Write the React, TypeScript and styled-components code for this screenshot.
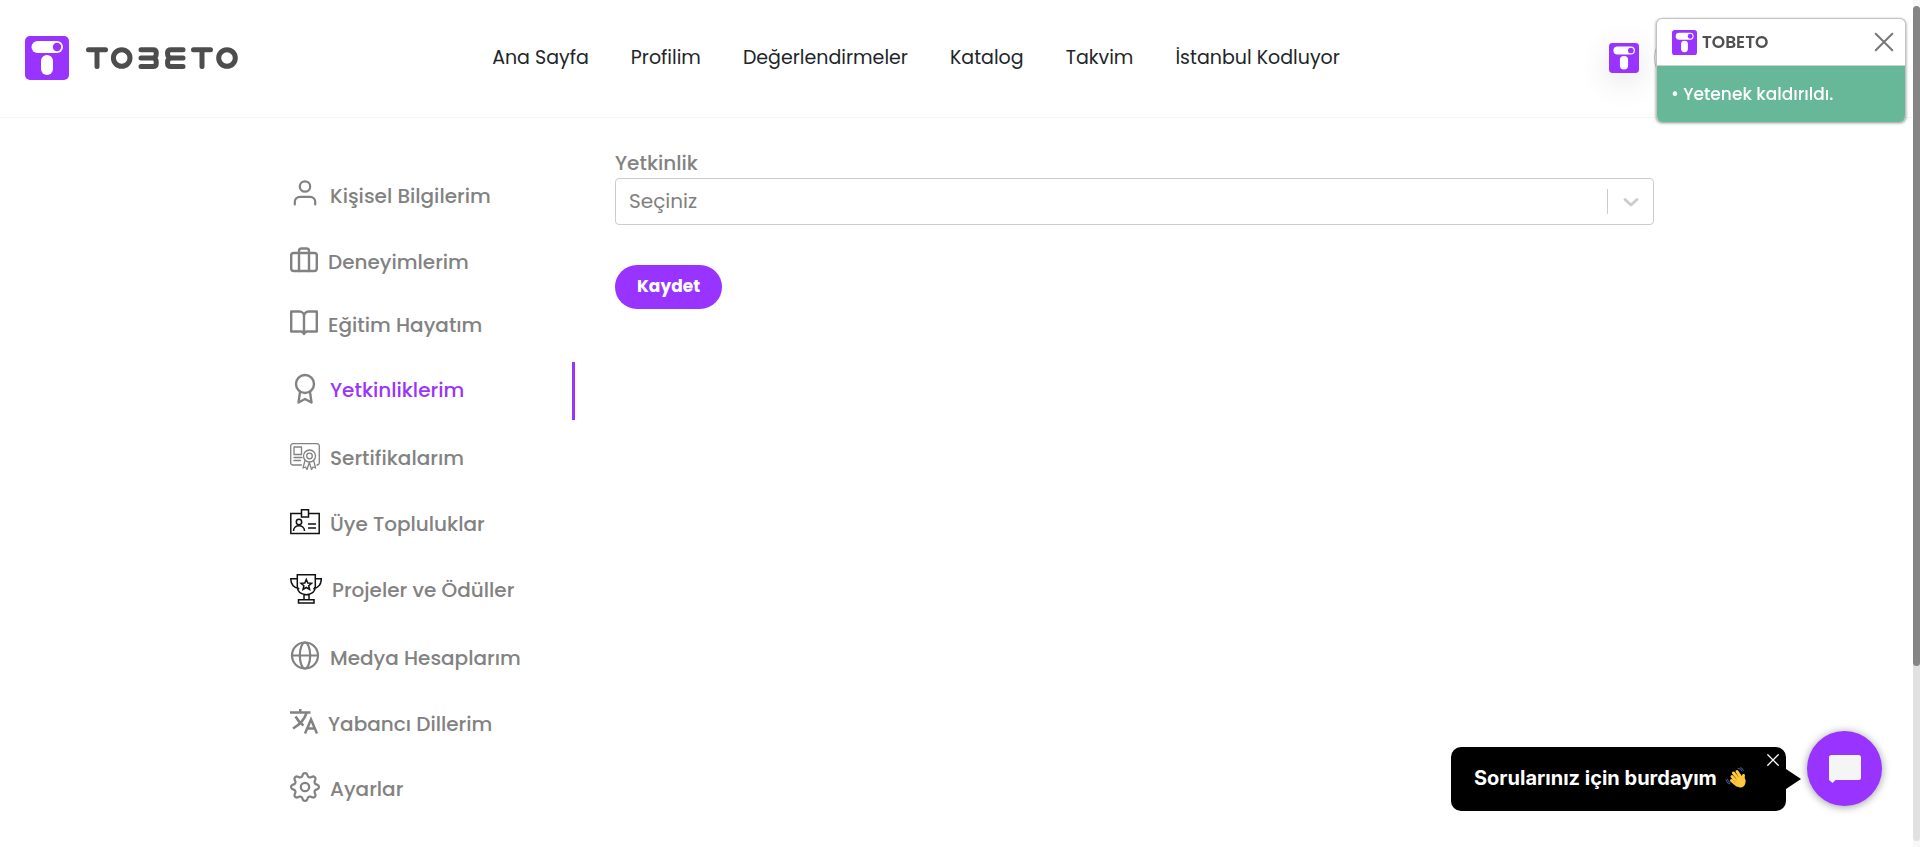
import React from 'react';
import styled, { createGlobalStyle } from 'styled-components';

const Global = createGlobalStyle`
  *, *::before, *::after { box-sizing: border-box; }
  body { margin: 0; background: #fff; color: #828282; font-family: Poppins, Inter, sans-serif; font-size: 18px; line-height: 28px; }
  button, select, input { font-family: inherit; }
  svg { display: block; }
  html { scrollbar-width: none; }
`;

const Page = styled.div`
  padding-right: 7px;
`;

const Header = styled.header`
  display: grid;
  grid-template-columns: auto 1fr auto;
  align-items: center;
  height: 118px;
  padding: 0 24px 2px 25px;
  border-bottom: 1px solid #f4f4f4;
`;

const BrandLink = styled.a`
  justify-self: start;
`;

const Nav = styled.nav`
  display: flex;
  justify-content: center;
  gap: 42px;
  padding-right: 16px;
`;

const NavLink = styled.a`
  color: #212529;
  font-size: 19px;
  line-height: 28px;
  text-decoration: none;
  white-space: nowrap;
`;

const HeaderTools = styled.div`
  display: flex;
  align-items: center;
  gap: 15px;
`;

const AppButton = styled.button`
  padding: 0;
  border: 0;
  border-radius: 3px;
  background: none;
  box-shadow: 0 8px 32px rgba(0, 0, 0, 0.12);
`;

const ProfileButton = styled.button`
  width: 235px;
  height: 56px;
  border: 1px solid #c4c4c4;
  border-radius: 28px;
  background: #fff;
`;

const Content = styled.div`
  display: grid;
  grid-template-columns: 285px 1fr;
  gap: 40px;
  max-width: 1395px;
  margin: 0 auto;
  padding: 30px 0 0 31px;
`;

const Sidebar = styled.nav`
  display: grid;
  grid-template-rows: 66px 66px 63px 65px 68px 66px 66px 68px 66px 65px;
  align-items: end;
  padding-top: 12px;
`;

const SideLink = styled.a<{ $active?: boolean }>`
  display: flex;
  align-items: center;
  gap: 10px;
  height: 58px;
  padding-bottom: 2px;
  border-right: 3px solid ${(p) => (p.$active ? '#9933ff' : 'transparent')};
  color: ${(p) => (p.$active ? '#9933ff' : '#828282')};
  font-size: 20px;
  line-height: 30px;
  font-weight: 500;
  text-decoration: none;
  white-space: nowrap;
`;

const Icon = styled.svg<{ $tone?: string; $stroke?: number; $sharp?: boolean }>`
  flex: none;
  margin-bottom: 2px;
  fill: none;
  stroke: ${(p) => p.$tone ?? '#828282'};
  stroke-width: ${(p) => p.$stroke ?? 2.2};
  stroke-linecap: ${(p) => (p.$sharp ? 'butt' : 'round')};
  stroke-linejoin: ${(p) => (p.$sharp ? 'miter' : 'round')};
`;

const Form = styled.form`
  display: flex;
  flex-direction: column;
  align-items: flex-start;
`;

const Label = styled.label`
  font-size: 20px;
  line-height: 30px;
  font-weight: 500;
`;

const SelectBox = styled.div`
  display: grid;
  grid-template-columns: 1fr 46px;
  align-items: center;
  width: 100%;
  height: 47px;
  border: 1px solid #ccc;
  border-radius: 4px;
`;

const Select = styled.select`
  grid-area: 1 / 1 / 2 / 3;
  width: 100%;
  height: 45px;
  padding: 0 13px 2px;
  border: 0;
  background: none;
  appearance: none;
  color: #808080;
  font-size: 20px;
`;

const Indicator = styled.span`
  grid-area: 1 / 2 / 2 / 3;
  display: flex;
  align-items: center;
  justify-content: center;
  height: 25px;
  border-left: 1px solid #ccc;
  pointer-events: none;
`;

const SaveButton = styled.button`
  height: 44px;
  margin-top: 40px;
  padding: 0 22px 3px;
  border: 0;
  border-radius: 22px;
  background: #9933ff;
  color: #fff;
  font-size: 17px;
  font-weight: 700;
`;

const Toast = styled.section`
  position: fixed;
  top: 18px;
  right: 14px;
  width: 250px;
  overflow: hidden;
  border: 1px solid #c3c3c3;
  border-bottom: 0;
  border-radius: 6px;
  background: #fff;
  box-shadow: 0 1px 3px rgba(0, 0, 0, 0.45);
`;

const ToastHead = styled.header`
  display: flex;
  align-items: center;
  gap: 5px;
  height: 47px;
  padding: 0 10px 0 15px;
  border-bottom: 1px solid #d0d0d0;
`;

const ToastTitle = styled.strong`
  flex: 1;
  color: #505050;
  font-size: 17px;
  font-weight: 600;
`;

const CloseButton = styled.button`
  padding: 0;
  border: 0;
  background: none;
`;

const ToastBody = styled.p`
  margin: 0;
  padding: 14px;
  background: #66b899;
  color: #fff;
  font-size: 17px;
  line-height: 28px;
  font-weight: 500;
`;

const Chat = styled.aside`
  position: fixed;
  right: 38px;
  bottom: 36px;
  display: flex;
  align-items: flex-end;
`;

const Bubble = styled.div`
  position: relative;
  width: 335px;
  height: 64px;
  padding: 18px 23px;
  border-radius: 10px;
  background: #000;
  color: #fff;
  font-family: Inter, sans-serif;
  font-size: 20px;
  line-height: 26px;
  font-weight: 700;
  white-space: nowrap;
`;

const BubbleText = styled.span`
  display: flex;
  align-items: center;
  gap: 8px;
`;

const BubbleClose = styled(CloseButton)`
  position: absolute;
  top: 6px;
  right: 6px;
`;

const BubbleArrow = styled.svg`
  margin-bottom: 22px;
`;

const Launcher = styled.button`
  display: grid;
  place-items: center;
  width: 75px;
  height: 75px;
  margin: 0 0 5px 6px;
  padding: 0;
  border: 0;
  border-radius: 50%;
  background: #9933ff;
  box-shadow: 0 1px 8px rgba(0, 0, 0, 0.4);
`;

const ScrollRail = styled.div`
  position: fixed;
  top: 0;
  right: 0;
  bottom: 0;
  width: 7px;
  padding: 6px 0;
  background: #f8f8f8;
`;

const ScrollTrack = styled.div`
  height: 100%;
  border-radius: 4px;
  background: #e1e1e1;
`;

const ScrollThumb = styled.div`
  height: 79%;
  border-radius: 4px;
  background: #858585;
`;

const MarkShapes = () => (
  <>
    <rect width="44" height="44" rx="5" fill="#9933ff" />
    <rect x="6.5" y="5" width="31.5" height="12" rx="6" fill="#fff" />
    <circle cx="32" cy="11" r="4.2" fill="#9933ff" />
    <rect x="16" y="19" width="12" height="20" rx="6" fill="#fff" />
  </>
);

const Mark = ({ size }: { size: number }) => (
  <svg width={size} height={size} viewBox="0 0 44 44" aria-hidden="true">
    <MarkShapes />
  </svg>
);

const Logo = () => (
  <svg width="214" height="44" viewBox="0 0 214 44" role="img" aria-label="Tobeto">
    <MarkShapes />
    <g fill="none" stroke="#4d4d4d" strokeWidth="5" strokeLinecap="round" strokeLinejoin="round">
      <path d="M63.5 13.7H80.5M72 14V30.5M168.500 13.7H185.5M177 14V30.5" />
      <circle cx="96.7" cy="22" r="8.3" />
      <circle cx="202" cy="22" r="8.3" />
      <path d="M116 13.7H128Q131.3 13.7 131.3 17Q131.3 22 128 22H116M128 22Q131.3 22 131.3 27Q131.3 30.500 128 30.5H116" />
      <path d="M158 13.7H146Q142.5 13.7 142.5 17Q142.5 22 146 22H158M146 22Q142.5 22 142.5 27Q142.5 30.500 146 30.5H158" />
    </g>
  </svg>
);

const Cross = ({ size, color }: { size: number; color: string }) => (
  <svg width={size} height={size} viewBox="0 0 24 24" stroke={color} strokeWidth="2.2" strokeLinecap="round" aria-hidden="true">
    <path d="M3 3L21 21M21 3L3 21" />
  </svg>
);

const WaveHand = () => (
  <svg width="22" height="22" viewBox="0 0 22 22" fill="none" strokeLinecap="round" role="img" aria-label="el sallama">
    <g stroke="#ffc83d" strokeWidth="3">
      <path d="M7 9.500L13 16M8.500 6L14.500 13M12 4.500L17 12M6.500 13.500L12 18" />
      <path d="M18.500 8.500Q17.500 11 19 13.500" />
    </g>
    <path d="M9 13L16 8.500Q21 11 20.500 15.500Q19.500 21 14.500 20.500Q11.500 20 8.500 16Z" fill="#ffc83d" />
    <path d="M8.500 9L11.500 12.500M11 7L14 10.500M7.500 12.500L10.500 15" stroke="#d98f1f" strokeWidth="0.700" />
    <path d="M13 1.500Q16 1 17 4M15.500 .700Q18 1 18.500 3.500M1 13Q1.500 16.500 5 17M2.500 12.500Q3 15 5 15.500" stroke="#3f63ad" strokeWidth="1" />
  </svg>
);

const UserIcon = () => (
  <Icon width="30" height="32" viewBox="0 0 30 32">
    <circle cx="15" cy="7.5" r="5.2" />
    <path d="M4.800 25.5v-2.700a5 5 0 0 1 5-5h10.400a5 5 0 0 1 5 5v2.700" />
  </Icon>
);

const CaseIcon = () => (
  <Icon width="28" height="30" viewBox="0 0 28 30" $stroke={2.4}>
    <rect x="1.2" y="7" width="25.6" height="18" rx="2.5" />
    <path d="M9 25V5a2.500 2.500 0 0 1 2.500-2.500h5A2.500 2.500 0 0 1 19 5v20" />
  </Icon>
);

const BookIcon = () => (
  <Icon width="28" height="30" viewBox="0 0 28 30" $stroke={2.4}>
    <path d="M1.200 2.500h8.300a4.500 4.500 0 0 1 4.500 4.500v18a3.500 3.500 0 0 0-3.500-2.500H1.200zM26.800 2.500h-8.300A4.500 4.500 0 0 0 14 7v18a3.500 3.500 0 0 1 3.500-2.500h9.300z" />
  </Icon>
);

const AwardIcon = () => (
  <Icon width="30" height="32" viewBox="0 0 30 32" $stroke={2.4}>
    <circle cx="15" cy="11" r="9" />
    <path d="M10 18.800L8.500 29.500l6.500-3.500 6.500 3.500-1.500-10.700" />
  </Icon>
);

const CertificateIcon = () => (
  <Icon width="30" height="32" viewBox="0 0 30 32" $stroke={1.3}>
    <path d="M11.500 24H3a2.300 2.300 0 0 1-2.300-2.300V5A2.300 2.300 0 0 1 3 2.700h24A2.300 2.300 0 0 1 29.300 5v16.700A2.300 2.300 0 0 1 27 24" />
    <path d="M4 6h7.500v7.500H4zM4 16.500h8M4 19.500h6.500" />
    <circle cx="19.5" cy="15" r="6" />
    <circle cx="19.5" cy="15" r="2.8" />
    <path d="M15 19.500l-2 7.500 2.500-1 1.500 2.500 2.300-7 2.300 7 1.500-2.500 2.500 1-2-7.500" />
  </Icon>
);

const BadgeIcon = () => (
  <Icon $tone="#111" $stroke={1.5} $sharp width="30" height="32" viewBox="0 0 30 32">
    <path d="M11.500 6.500H.8v20h28.400v-20H18.500M11.500 2.700h7v7.300h-7zM18 17h8M18 21h8M3.500 24c0-7 11-7 11 0" />
    <circle cx="9" cy="15" r="2.7" />
  </Icon>
);

const TrophyIcon = () => (
  <Icon $tone="#111" $stroke={1.5} $sharp width="32" height="32" viewBox="0 0 32 32">
    <path d="M7.300 1.700h18v12q0 7-9 8-9-1-9-8zM7.300 5.700H.8q0 8.500 8.500 10M25.300 5.700h6q0 8.500-8 10M14 21.700v5h5v-5M8.500 26.700h15.500v3.400H8.500z" />
    <path d="M16.300 6.500l1.500 3.500 3.800.3-2.900 2.500.9 3.700-3.300-2-3.300 2 .9-3.700-2.900-2.500 3.800-.3z" />
  </Icon>
);

const GlobeIcon = () => (
  <Icon width="30" height="32" viewBox="0 0 30 32">
    <circle cx="15" cy="14.5" r="13" />
    <ellipse cx="15" cy="14.5" rx="5.2" ry="13" />
    <path d="M2 14.500h26" />
  </Icon>
);

const TranslateIcon = () => (
  <Icon $stroke={2.5} $sharp width="28" height="30" viewBox="0 0 28 30">
    <path d="M0 4.500h20.500M10.300 1v3.500M16.500 5Q13.500 14.500 3 20.500M5.500 8.500Q9 14.500 13.500 17.500M15 25.500l6-14 6 14M17 20.500h8" />
  </Icon>
);

const gearPath = (() => {
  const points: string[] = [];
  for (let i = 0; i <= 96; i += 1) {
    const angle = (i / 96) * Math.PI * 2;
    const wave = Math.cos(angle * 8);
    const radius = 12.2 + 1.7 * Math.sign(wave) * Math.pow(Math.abs(wave), 0.6);
    points.push((15 + radius * Math.cos(angle)).toFixed(2) + ' ' + (15 + radius * Math.sin(angle)).toFixed(2));
  }
  return 'M' + points.join('L') + 'Z';
})();

const GearIcon = () => (
  <Icon width="30" height="32" viewBox="0 0 30 32">
    <path d={gearPath} />
    <circle cx="15" cy="15" r="4.2" />
  </Icon>
);

const navItems = ['Ana Sayfa', 'Profilim', 'Değerlendirmeler', 'Katalog', 'Takvim', 'İstanbul Kodluyor'];

const sideItems = [
  { label: 'Kişisel Bilgilerim', icon: UserIcon },
  { label: 'Deneyimlerim', icon: CaseIcon },
  { label: 'Eğitim Hayatım', icon: BookIcon },
  { label: 'Yetkinliklerim', icon: AwardIcon, active: true },
  { label: 'Sertifikalarım', icon: CertificateIcon },
  { label: 'Üye Topluluklar', icon: BadgeIcon },
  { label: 'Projeler ve Ödüller', icon: TrophyIcon },
  { label: 'Medya Hesaplarım', icon: GlobeIcon },
  { label: 'Yabancı Dillerim', icon: TranslateIcon },
  { label: 'Ayarlar', icon: GearIcon },
];

export default function App() {
  return (
    <>
      <Global />
      <Page>
        <Header>
          <BrandLink href="#"><Logo /></BrandLink>
          <Nav>
            {navItems.map((item) => <NavLink key={item} href="#">{item}</NavLink>)}
          </Nav>
          <HeaderTools>
            <AppButton type="button" aria-label="Tobeto"><Mark size={30} /></AppButton>
            <ProfileButton type="button" aria-label="Profil" />
          </HeaderTools>
        </Header>
        <Content>
          <Sidebar>
            {sideItems.map(({ label, icon: ItemIcon, active }) => (
              <SideLink key={label} href="#" $active={active}><ItemIcon />{label}</SideLink>
            ))}
          </Sidebar>
          <Form>
            <Label htmlFor="skill">Yetkinlik</Label>
            <SelectBox>
              <Select id="skill"><option>Seçiniz</option></Select>
              <Indicator>
                <svg width="20" height="20" viewBox="0 0 20 20" fill="none" stroke="#ccc" strokeWidth="2.8" strokeLinecap="round" strokeLinejoin="round">
                  <path d="M4 7.500l6 5.500 6-5.500" />
                </svg>
              </Indicator>
            </SelectBox>
            <SaveButton type="button">Kaydet</SaveButton>
          </Form>
        </Content>
      </Page>
      <Toast role="status">
        <ToastHead>
          <Mark size={25} />
          <ToastTitle>TOBETO</ToastTitle>
          <CloseButton type="button" aria-label="Kapat"><Cross size={22} color="#777" /></CloseButton>
        </ToastHead>
        <ToastBody>• Yetenek kaldırıldı.</ToastBody>
      </Toast>
      <Chat>
        <Bubble>
          <BubbleText>Sorularınız için burdayım <WaveHand /></BubbleText>
          <BubbleClose type="button" aria-label="Kapat"><Cross size={14} color="#fff" /></BubbleClose>
        </Bubble>
        <BubbleArrow width="15" height="20" viewBox="0 0 15 20" aria-hidden="true"><path d="M0 0L15 10L0 20Z" /></BubbleArrow>
        <Launcher type="button" aria-label="Sohbet">
          <svg width="32" height="28" viewBox="0 0 32 28" fill="#f5f5f5"><path d="M2.500 0h27a2.500 2.500 0 0 1 2.500 2.500v20a2.500 2.500 0 0 1-2.500 2.500H6.500l-3 3L0 25V2.500A2.500 2.500 0 0 1 2.500 0z" /></svg>
        </Launcher>
      </Chat>
      <ScrollRail aria-hidden="true"><ScrollTrack><ScrollThumb /></ScrollTrack></ScrollRail>
    </>
  );
}
